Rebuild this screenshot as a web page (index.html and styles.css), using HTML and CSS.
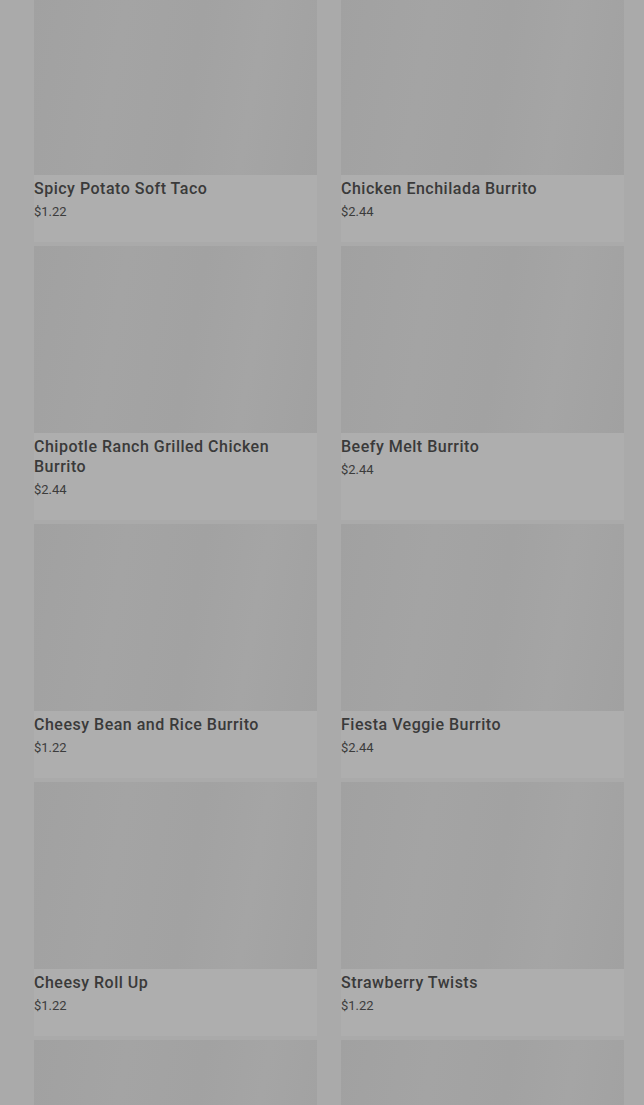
FILE: index.html
```html
<!DOCTYPE html>
<html lang="en">
<head>
<meta charset="utf-8">
<title>Menu</title>
<link rel="stylesheet" href="styles.css">
</head>
<body>
<main class="menu">
  <div class="grid">
    <article class="card"><div class="thumb"></div><div class="info"><h3 class="name">Spicy Potato Soft Taco</h3><p class="price">$1.22</p></div></article>
    <article class="card"><div class="thumb"></div><div class="info"><h3 class="name">Chicken Enchilada Burrito</h3><p class="price">$2.44</p></div></article>
    <article class="card"><div class="thumb"></div><div class="info"><h3 class="name">Chipotle Ranch Grilled Chicken Burrito</h3><p class="price">$2.44</p></div></article>
    <article class="card"><div class="thumb"></div><div class="info"><h3 class="name">Beefy Melt Burrito</h3><p class="price">$2.44</p></div></article>
    <article class="card"><div class="thumb"></div><div class="info"><h3 class="name">Cheesy Bean and Rice Burrito</h3><p class="price">$1.22</p></div></article>
    <article class="card"><div class="thumb"></div><div class="info"><h3 class="name">Fiesta Veggie Burrito</h3><p class="price">$2.44</p></div></article>
    <article class="card"><div class="thumb"></div><div class="info"><h3 class="name">Cheesy Roll Up</h3><p class="price">$1.22</p></div></article>
    <article class="card"><div class="thumb"></div><div class="info"><h3 class="name">Strawberry Twists</h3><p class="price">$1.22</p></div></article>
    <article class="card"><div class="thumb"></div></article>
    <article class="card"><div class="thumb"></div></article>
  </div>
</main>
</body>
</html>
```
FILE: styles.css
```css
html, body {
  margin: 0;
  padding: 0;
  background: #aaaaaa;
  font-family: Roboto, "Liberation Sans", sans-serif;
  overflow: hidden;
}

.menu {
  padding: 0 20px 0 34px;
}

.grid {
  display: grid;
  grid-template-columns: 283px 283px;
  column-gap: 24px;
  row-gap: 4px;
  margin-top: -12px;
}

.card {
  background: #aeaeae;
  display: flex;
  flex-direction: column;
}

.thumb {
  height: 187px;
  background: linear-gradient(100deg, #a1a1a1 0%, #a4a4a4 30%, #a2a2a2 55%, #a5a5a5 75%, #a1a1a1 100%);
}

.info {
  padding: 4px 0 21px;
}

.name {
  margin: 0;
  font-size: 16px;
  line-height: 20px;
  font-weight: 500;
  letter-spacing: 0.5px;
  color: #3a3a3a;
  padding-right: 30px;
}

.price {
  margin: 4px 0 0;
  font-size: 13px;
  line-height: 18px;
  font-weight: 400;
  color: #3c3c3c;
}
```
